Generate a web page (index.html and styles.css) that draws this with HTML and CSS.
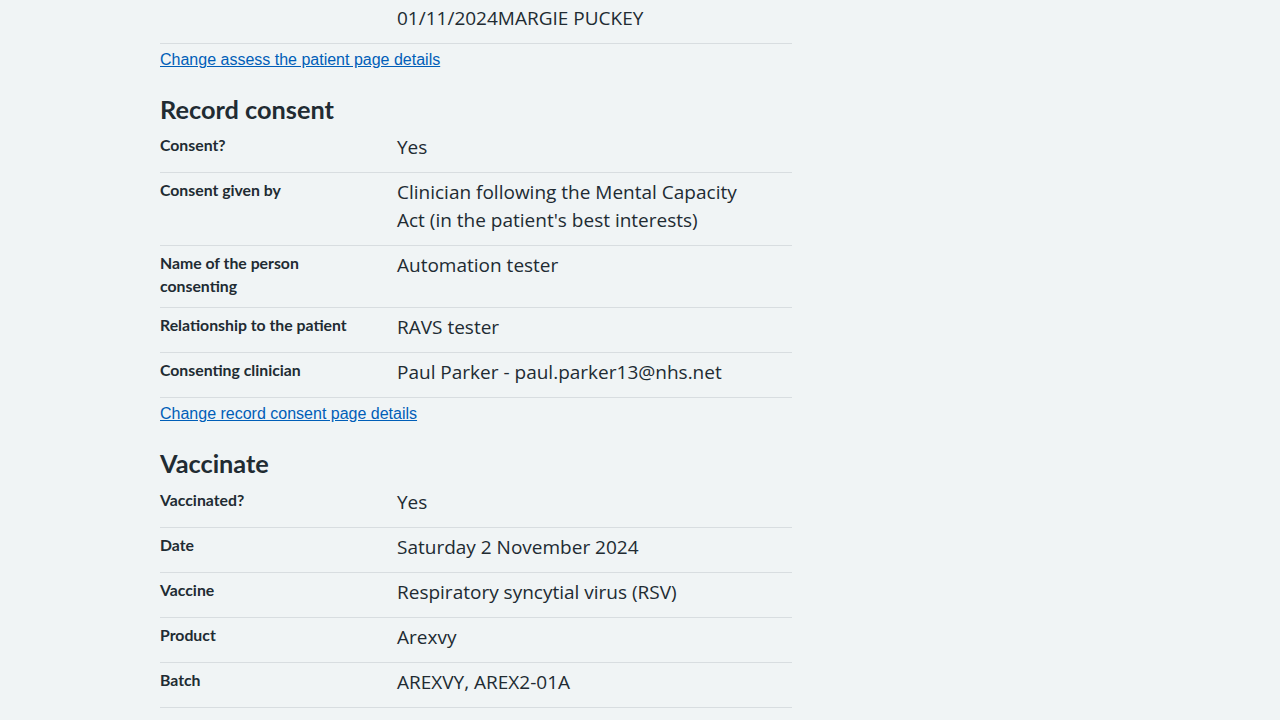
FILE: index.html
```html
<!DOCTYPE html>
<html lang="en">
<head>
<meta charset="utf-8">
<title>Check and confirm</title>
<link rel="stylesheet" href="styles.css">
</head>
<body>
<main class="page">
  <dl class="summary summary-first">
    <div class="summary-row">
      <dt class="summary-key"></dt>
      <dd class="summary-value">01/11/2024MARGIE PUCKEY</dd>
    </div>
  </dl>
  <p class="change"><a href="#" class="change-link">Change assess the patient page details</a></p>

  <h2 class="section-heading">Record consent</h2>
  <dl class="summary">
    <div class="summary-row">
      <dt class="summary-key">Consent?</dt>
      <dd class="summary-value">Yes</dd>
    </div>
    <div class="summary-row">
      <dt class="summary-key">Consent given by</dt>
      <dd class="summary-value">Clinician following the Mental Capacity Act (in the patient's best interests)</dd>
    </div>
    <div class="summary-row">
      <dt class="summary-key">Name of the person consenting</dt>
      <dd class="summary-value">Automation tester</dd>
    </div>
    <div class="summary-row">
      <dt class="summary-key">Relationship to the patient</dt>
      <dd class="summary-value">RAVS tester</dd>
    </div>
    <div class="summary-row">
      <dt class="summary-key">Consenting clinician</dt>
      <dd class="summary-value">Paul Parker - paul.parker13@nhs.net</dd>
    </div>
  </dl>
  <p class="change"><a href="#" class="change-link">Change record consent page details</a></p>

  <h2 class="section-heading section-heading-second">Vaccinate</h2>
  <dl class="summary">
    <div class="summary-row">
      <dt class="summary-key">Vaccinated?</dt>
      <dd class="summary-value">Yes</dd>
    </div>
    <div class="summary-row">
      <dt class="summary-key">Date</dt>
      <dd class="summary-value">Saturday 2 November 2024</dd>
    </div>
    <div class="summary-row">
      <dt class="summary-key">Vaccine</dt>
      <dd class="summary-value">Respiratory syncytial virus (RSV)</dd>
    </div>
    <div class="summary-row">
      <dt class="summary-key">Product</dt>
      <dd class="summary-value">Arexvy</dd>
    </div>
    <div class="summary-row">
      <dt class="summary-key">Batch</dt>
      <dd class="summary-value">AREXVY, AREX2-01A</dd>
    </div>
    <div class="summary-row">
      <dt class="summary-key">Expiry date</dt>
      <dd class="summary-value">1 December 2025</dd>
    </div>
  </dl>
</main>
</body>
</html>
```
FILE: styles.css
```css
html, body {
  margin: 0;
  padding: 0;
  background: #f0f4f5;
  color: #212b32;
  font-family: "Open Sans", "Noto Sans", sans-serif;
}

.page {
  width: 632px;
  margin-left: 160px;
}

.summary {
  margin: 0;
  padding: 0;
}

.summary-first {
  margin-top: -1px;
}

.summary-row {
  display: grid;
  grid-template-columns: 237px 1fr;
  border-bottom: 1px solid #d8dde0;
}

.summary-key {
  margin: 0;
  padding: 5px 24px 10px 0;
  font-family: "Lato", "Open Sans", sans-serif;
  font-weight: 700;
  font-size: 15.8px;
  line-height: 23px;
}

.summary-value {
  margin: 0;
  padding: 5px 24px 11px 0;
  font-size: 19px;
  line-height: 28px;
}

.change {
  margin: 4px 0 0;
  font-family: "Liberation Sans", Arial, sans-serif;
  font-size: 16px;
  line-height: 24px;
}

.change-link {
  color: #005eb8;
  text-decoration: underline;
  text-underline-offset: 1px;
}

.section-heading {
  margin: 21px 0 3px;
  font-family: "Lato", "Open Sans", sans-serif;
  font-weight: 700;
  font-size: 25.3px;
  line-height: 32px;
}

.section-heading-second {
  margin-bottom: 4px;
}
```
